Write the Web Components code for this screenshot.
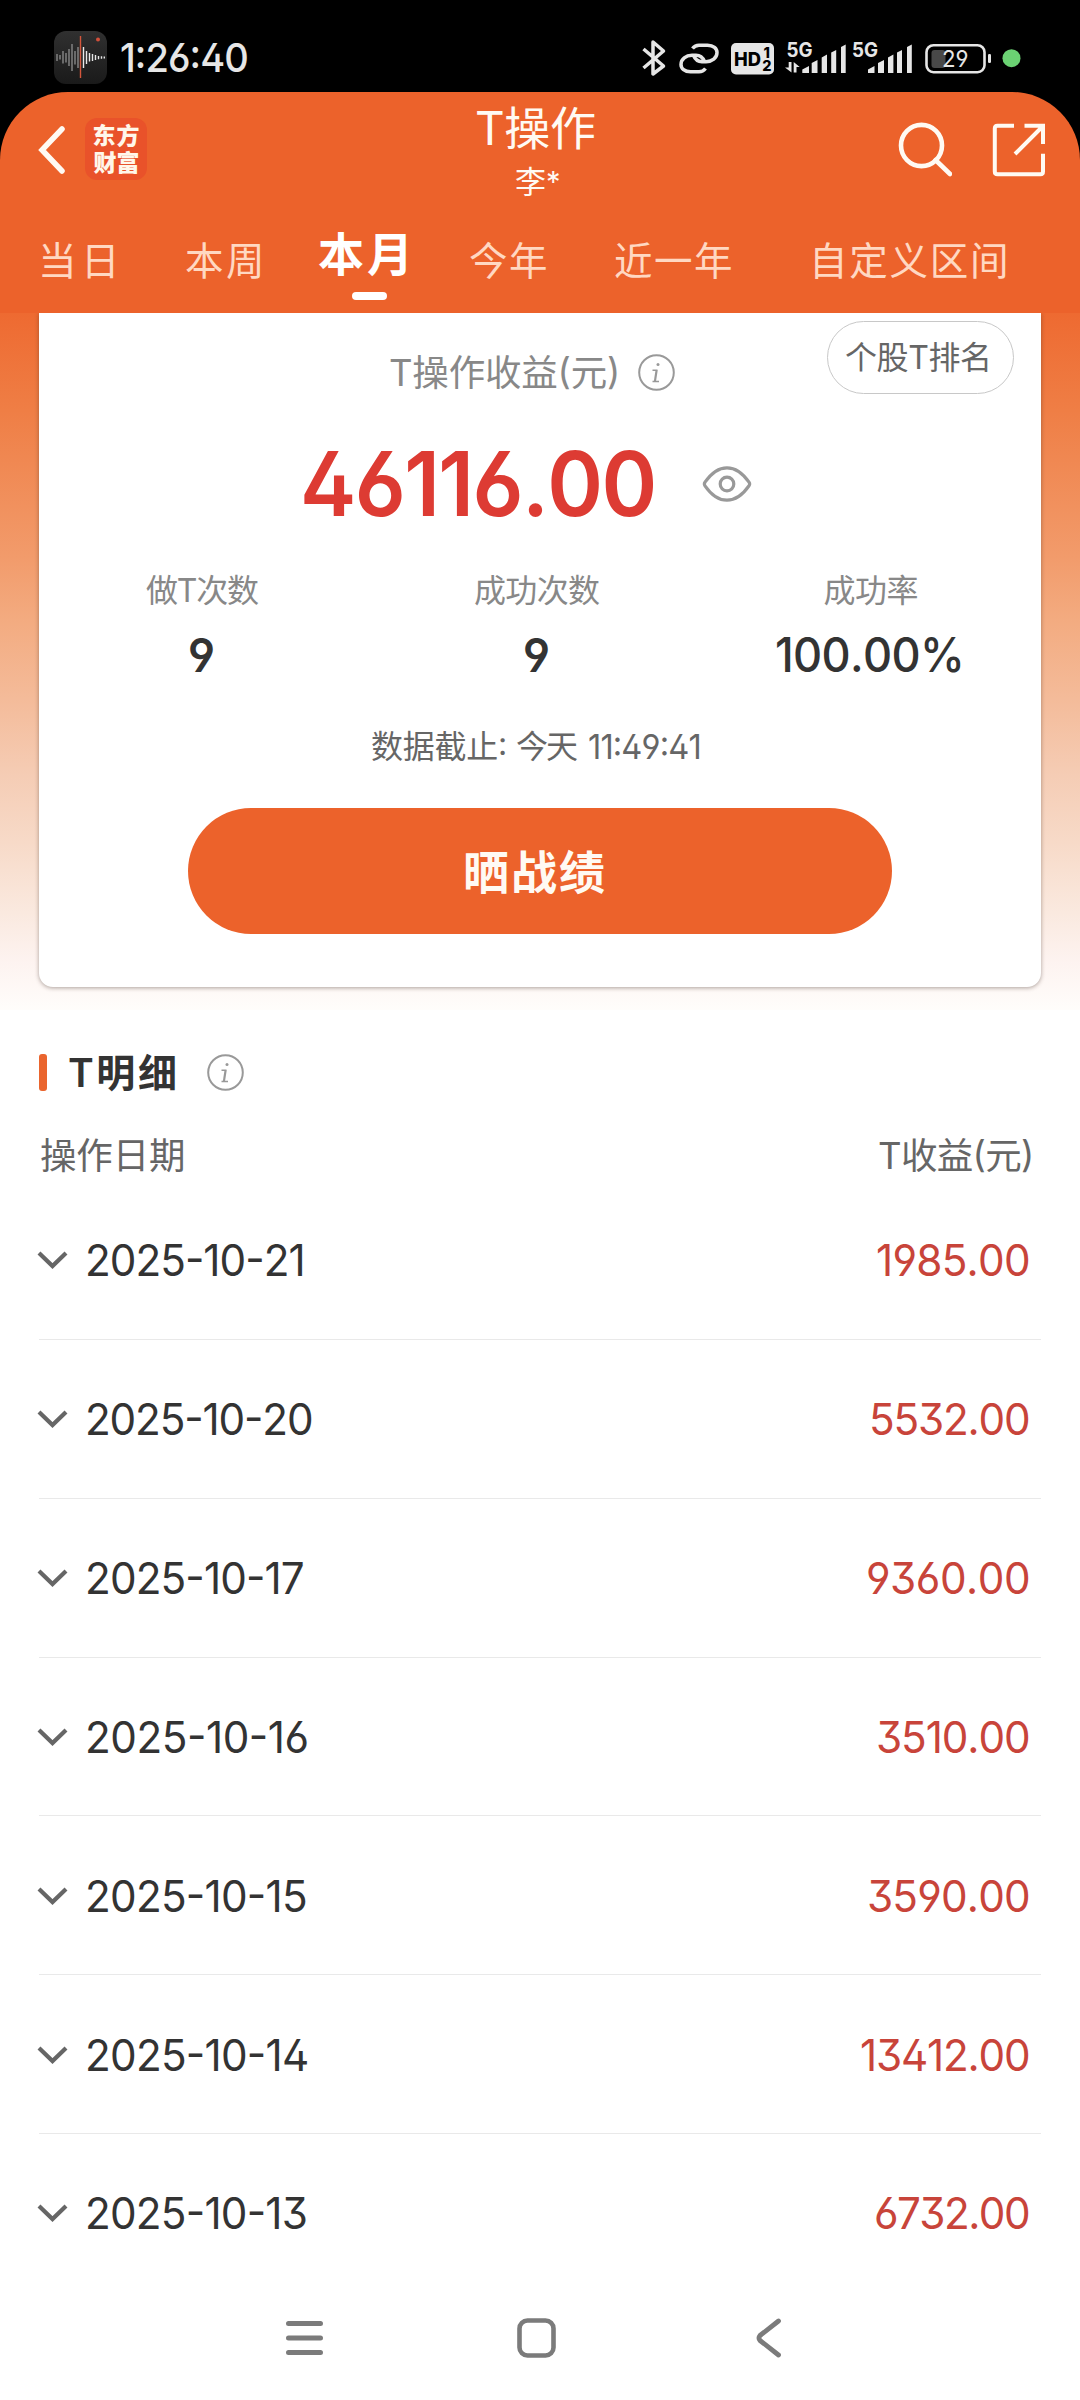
<!DOCTYPE html>
<html lang="zh-CN">
<head>
<meta charset="utf-8">
<title>T操作</title>
<style>
html,body{margin:0;padding:0;background:#fff}
body{width:1080px;height:2400px;overflow:hidden;font-family:Inter,"Noto Sans CJK SC",sans-serif}
</style>
</head>
<body>
<t-app></t-app>
<script>
const define=(name,html,init)=>{
  const tpl=document.createElement('template');
  tpl.innerHTML=html;
  customElements.define(name,class extends HTMLElement{
    connectedCallback(){
      if(this.shadowRoot)return;
      this.attachShadow({mode:'open'}).appendChild(tpl.content.cloneNode(true));
      if(init)init.call(this,this.shadowRoot);
    }
  });
};
const ctx=document.createElement('canvas').getContext('2d');

/* One line of text, tracked so that its ink spans exactly `w` pixels; `x` condenses the glyphs. */
define('fit-text',`<style>
:host{display:block;flex:none;white-space:pre;font-feature-settings:"cv02","cv03","cv04","cv09","case";font-kerning:none}
:host([plain]){font-feature-settings:normal}
span{display:inline-block;transform-origin:0 50%}
</style><span></span>`,function(r){
  const s=r.querySelector('span'),t=this.getAttribute('t'),w=+this.getAttribute('w'),x=+(this.getAttribute('x')||1);
  const size=+this.getAttribute('s'),wt=this.getAttribute('b')||400,h=this.getAttribute('h')||Math.round(size*1.2);
  const fam='Inter,"Noto Sans CJK SC",sans-serif';
  this.style.cssText+=`;width:${w}px;height:${h}px;line-height:${h}px;font-family:${fam};font-size:${size}px;font-weight:${wt}`;
  s.textContent=t;
  ctx.font=`${wt} ${size}px ${fam}`;
  const m=ctx.measureText(t),lsb=-m.actualBoundingBoxLeft,rsb=m.width-m.actualBoundingBoxRight;
  const ink=s.getBoundingClientRect().width-lsb-rsb,n=[...t].length,goal=w/x;
  if(n>1)s.style.letterSpacing=((goal-ink)/(n-1))+'px';
  s.style.marginLeft=(n>1?-lsb:(goal-ink)/2-lsb)*x+'px';
  if(x!==1)s.style.transform=`scaleX(${x})`;
});

define('status-bar',`<style>
:host{display:flex;align-items:center;height:92px;background:#000;color:#e6e6e6;padding:0 59px 0 54px;box-sizing:border-box}
svg{display:block;flex:none;overflow:visible}
.app{margin-top:23px}.clock{margin:24px 395px 0 14px}
.r{margin-top:23px}
text{font-family:Inter,sans-serif}
</style>
<svg class="app" width="53" height="53" viewBox="0 0 53 53"><defs><linearGradient id="g" x1="0" y1="0" x2="0" y2="1"><stop offset="0" stop-color="#303030"/><stop offset="1" stop-color="#1a1a1a"/></linearGradient></defs>
<rect width="53" height="53" rx="12" fill="url(#g)"/>
<path d="M3 23v7M6 24v4.500M9 20v12.500M12 22v9.500M15 18v17M18 13v27M21 20v13.500M24 16v21" stroke="#777" stroke-width="1.700"/>
<path d="M29.500 16v21M32.500 20v13M35.500 22v8.500M38.500 23v7M41.500 24v5M44.500 25v3.200M47.500 25.200v2.500M50.300 25.500v2" stroke="#e8e8e8" stroke-width="1.400"/>
<path d="M26.500 5v42" stroke="#d4563c" stroke-width="1.400"/><circle cx="44" cy="8.500" r="2" fill="#d24f3a"/></svg>
<fit-text class="clock" t="1:26:40" w="126" s="40" h="50" b="450" x=".95"></fit-text>
<svg class="r" width="378" height="36" viewBox="642 39 378 36" fill="none" stroke="#e6e6e6">
<path d="M643.500 48 663.500 65 653 73V41L663.500 50 643.500 67" stroke-width="3.500" stroke-linejoin="round"/>
<path d="M692.500 47.500Q695 44.200 699 44.200H707.500C713.500 44.200 717 47.500 717 51.500C717 57 712 60.700 706 60.700H702C698 60.700 695 58 693.500 54.500" stroke-width="3.500"/>
<path d="M705.500 67.500Q703 70.800 699 70.800H690.500C684.500 70.800 681 67.500 681 63.500C681 58 686 54.300 692 54.300H696C700 54.300 703 57 704.500 60.500" stroke-width="3.500"/>
<g stroke="none" fill="#e6e6e6">
<rect x="731" y="42" width="43" height="31.500" rx="5"/>
<g fill="#000" font-weight="800"><text x="734" y="65" font-size="19" textLength="27" lengthAdjust="spacingAndGlyphs">HD</text><text x="763.500" y="56.500" font-size="14.500">1</text><text x="762.300" y="70" font-size="14.500">2</text></g>
<text x="786.500" y="55.800" font-size="20" font-weight="700" textLength="26" lengthAdjust="spacingAndGlyphs">5G</text>
<text x="852" y="55.800" font-size="20" font-weight="700" textLength="26" lengthAdjust="spacingAndGlyphs">5G</text>
<path d="M802.300 72V68.500L809 65V72zM811.700 72V62L817.500 59V72zM821.700 72V56.500L827 53.500V72zM831.200 72V51.500L836.200 49V72zM841 72V46L845.700 43.500V72z"/>
<path d="M868 72V68.500L874.500 65V72zM878 72V62L884 59V72zM888 72V56.500L893.400 53.500V72zM897 72V51.500L902 49V72zM907 72V46L911.800 43.500V72z"/>
<path d="M788.700 61h2.800v10.500L785 66.500h3.700zM793.700 71.500V61l6 5H796.500v5.500z"/>
<rect x="931.500" y="49" width="14" height="18" rx="3" fill="#484848"/>
<rect x="988" y="53" width="3" height="9" rx="1.200"/>
<text x="942" y="66" font-size="23.500" textLength="26.500" lengthAdjust="spacingAndGlyphs" style="font-feature-settings:'cv04'">29</text>
<circle cx="1011.500" cy="57.200" r="9" fill="#6bd273"/></g>
<rect x="926.500" y="44.200" width="58" height="27" rx="7" stroke-width="2.600"/>
</svg>`);

define('info-icon',`<style>:host{display:block;flex:none}svg{display:block}</style>
<svg width="37" height="37" viewBox="0 0 37 37" fill="none" stroke="#999" stroke-width="2"><circle cx="18.500" cy="18.500" r="17.300"/><path d="M14.500 16.200H19.500M14.500 27.500H21" stroke-width="1.500"/><path d="M18.600 16.300L16.900 27.300" stroke-width="2.200"/><circle cx="20" cy="10.500" r="1.500" fill="#999" stroke="none"/></svg>`);

define('top-header',`<style>
:host{display:block;background:#000}
.box{height:221px;background:#ec622b;border-radius:68px 68px 0 0;color:#fffaf3;display:flex;flex-direction:column}
.bar{height:116px;display:flex;align-items:flex-start}
svg{display:block;flex:none}
.back{margin:33px 0 0 37px}
.logo{margin:26px 0 0 19px;width:62px;height:62px;border-radius:12px;background:#e9522a;display:flex;flex-direction:column;align-items:center;justify-content:center;color:#fff7ea}
.mid{margin:10px 0 0 330px;width:118px;display:flex;flex-direction:column;align-items:center}
.name{display:flex;gap:3px;margin-left:2px}
.find{margin:29px 0 0 303px}.share{margin:30px 0 0 39px}
.tabs{height:105px;display:flex;align-items:flex-start;padding-left:42px;color:#ffd8c2}
.on{display:flex;flex-direction:column;align-items:center;color:#fff;margin:18px 0 0 59px}
.on i{width:35px;height:8px;border-radius:4px;background:#fff;margin:9px 0 0 14px;align-self:center}
</style>
<div class="box"><div class="bar">
<svg class="back" width="29" height="50" viewBox="38 125 29 50" fill="none" stroke="#fffaf3" stroke-width="5.500"><path d="M63 129 43 150 63 171" stroke-linecap="round"/></svg>
<div class="logo"><fit-text t="东方" w="45" s="23" h="27" b="900"></fit-text><fit-text t="财富" w="45" s="23" h="26" b="900"></fit-text></div>
<div class="mid"><fit-text t="T操作" w="118" s="46" h="52" b="400"></fit-text><div class="name"><fit-text t="李" w="29" s="31" h="55"></fit-text><fit-text plain t="*" w="10" s="29" h="55"></fit-text></div></div>
<svg class="find" width="54" height="56" viewBox="898 121 54 56" fill="none" stroke="#fffaf3" stroke-width="4.600"><ellipse cx="921.500" cy="145.500" rx="20.500" ry="20.600"/><path d="M935.500 160 950 174" stroke-linecap="round"/></svg>
<svg class="share" width="54" height="56" viewBox="991 122 54 56" fill="none" stroke="#fffaf3" stroke-width="4"><path d="M1014 125.700H997.500Q994.800 125.700 994.800 128.400V171.500Q994.800 174.200 997.500 174.200H1040.500Q1043 174.200 1043 171.500V153.700M1024.500 125.700H1043V144M1043 126 1015 154"/></svg>
</div>
<div class="tabs">
<fit-text t="当日" w="72" s="38.500" h="106"></fit-text>
<fit-text t="本周" w="74" s="38.500" h="106" style="margin-left:72px"></fit-text>
<div class="on"><fit-text t="本月" w="87" s="46" h="57" b="600"></fit-text><i></i></div>
<fit-text t="今年" w="76" s="38.500" h="106" style="margin-left:64px"></fit-text>
<fit-text t="近一年" w="116" s="38.500" h="106" style="margin-left:69px"></fit-text>
<fit-text t="自定义区间" w="191" s="38.500" h="106" style="margin-left:84px"></fit-text>
</div></div>`);

define('stat-cell',`<style>:host{display:flex;flex-direction:column;align-items:center;flex:none}
::slotted([slot=label]){color:#888}::slotted([slot=value]){color:#333;margin-top:18px}</style>
<slot name="label"></slot><slot name="value"></slot>`);

define('profit-card',`<style>
:host{display:block;height:697px;padding:0 39px;background:linear-gradient(#ee6a31 0,#ef7e45 14%,#f29b6b 35%,#f3ab80 44%,#f4bc9b 56%,#f5ccb4 66%,#f7dac8 76%,#fae9df 86%,#fdf3f0 93%,#fffdfb 100%)}
.card{height:674px;background:#fff;border-radius:0 0 14px 14px;box-shadow:0 1px 4px rgba(60,40,30,.42);clip-path:inset(0 -10px -10px);display:flex;flex-direction:column}
.head{height:82px;display:flex;align-items:flex-start;padding-left:351px;color:#888}
.pill{margin:8px 0 0 152px;width:187px;height:73px;box-sizing:border-box;border:1.500px solid #c8c8c8;border-radius:37px;color:#666;display:flex;align-items:center;padding-left:18px}
.total{height:178px;display:flex;align-items:center;padding-left:265px;color:#dd3b33}
.eye{display:block;margin-left:48px}
.stats{display:flex;height:120px;margin-top:-3px}
.time{display:flex;align-items:center;height:40px;margin:37px 0 0 333px;color:#666}
button{all:unset;box-sizing:border-box;width:704px;height:126px;margin:41px 0 0 149px;border-radius:63px;background:#ec622b;color:#fffaf3;display:flex;align-items:center;padding:1px 0 0 278px}
</style>
<div class="card">
<div class="head"><fit-text t="T操作收益(元)" w="227" s="36.500" h="121"></fit-text><info-icon style="margin:41px 0 0 21px"></info-icon>
<div class="pill"><fit-text t="个股T排名" w="142" s="32" h="44"></fit-text></div></div>
<div class="total"><fit-text t="46116.00" w="350" s="89" h="100" b="620" x=".95"></fit-text>
<svg class="eye" width="50" height="38" viewBox="0 0 50 38" fill="none" stroke="#999" stroke-width="3.200"><path d="M3 17.200C9 8.500 17 2.800 25 2.800S41 8.500 47 17.200Q48.300 19 47 20.800C41 29.500 33 35.200 25 35.200S9 29.500 3 20.800Q1.700 19 3 17.200Z"/><circle cx="25" cy="19" r="6.800"/></svg></div>
<div class="stats">
<stat-cell style="margin-left:107px"><fit-text slot="label" t="做T次数" w="113" s="32" h="42"></fit-text><fit-text slot="value" t="9" w="24" s="47" h="50" b="580" x=".95" style="margin-right:3px"></fit-text></stat-cell>
<stat-cell style="margin-left:216px"><fit-text slot="label" t="成功次数" w="125" s="32" h="42"></fit-text><fit-text slot="value" t="9" w="24" s="47" h="50" b="580" x=".95" style="margin-right:3px"></fit-text></stat-cell>
<stat-cell style="margin-left:177px"><fit-text slot="label" t="成功率" w="93" s="32" h="42" style="margin-left:4px"></fit-text><fit-text slot="value" t="100.00%" w="184" s="47.500" h="50" b="550" x=".95"></fit-text></stat-cell>
</div>
<div class="time"><fit-text t="数据截止:" w="133" s="32" h="40"></fit-text><fit-text t="今天" w="60" s="32" h="40" style="margin-left:12px"></fit-text><fit-text t="11:49:41" w="110" s="34" h="40" x=".96" style="margin-left:12px"></fit-text></div>
<button><fit-text t="晒战绩" w="139" s="46" h="60" b="600"></fit-text></button>
</div>`);

define('detail-head',`<style>
:host{display:block;padding:0 49px 0 39px;height:171px;box-sizing:border-box}
.t{display:flex;align-items:center;height:125px;color:#333}
.t i{width:8px;height:37px;border-radius:3px;background:#ea652e;margin-right:22px}
.c{display:flex;justify-content:space-between;color:#666;padding-left:2px;height:42px}
</style>
<div class="t"><i></i><fit-text t="T明细" w="106" s="39" h="50" b="600"></fit-text><info-icon style="margin-left:32px"></info-icon></div>
<div class="c"><fit-text t="操作日期" w="142" s="36.500" h="43"></fit-text><fit-text t="T收益(元)" w="152" s="36.500" h="43"></fit-text></div>`);

define('detail-row',`<style>
:host{display:flex;align-items:center;height:158.850px;box-sizing:border-box;margin:0 39px;padding:1px 12px 0 0;border-bottom:1.500px solid #e9e9e9;color:#333}
:host(:last-of-type){border-color:transparent}
svg{display:block;margin-left:-2px}
.d{margin-left:20px}.a{margin-left:auto;color:#c8443a}
</style><svg width="31" height="20" viewBox="0 0 31 20" fill="none" stroke="#666" stroke-width="4.200"><path d="M2 3 15.500 16 29 3"/></svg>`,function(r){
  const add=(c,t,w,b)=>{const e=document.createElement('fit-text');e.className=c;e.setAttribute('t',t);e.setAttribute('w',w);e.setAttribute('s',44);e.setAttribute('h',52);e.setAttribute('b',b);e.setAttribute('x',.96);r.appendChild(e)};
  add('d',this.getAttribute('date'),this.getAttribute('dw'),400);
  add('a',this.getAttribute('amount'),this.getAttribute('aw'),430);
});

define('nav-bar',`<style>:host{display:flex;align-items:center;height:124px;padding-left:286px}svg{display:block;flex:none}</style>
<svg width="38" height="40" viewBox="0 0 38 40" stroke="#7b7b7b" stroke-width="5" stroke-linecap="round"><path d="M2.500 5.500H34.500M2.500 20H34.500M2.500 34.500H34.500"/></svg>
<svg style="margin-left:193px" width="39" height="40" viewBox="0 0 39 40" fill="none" stroke="#7b7b7b" stroke-width="4.600"><rect x="2.500" y="2.500" width="34" height="35" rx="8"/></svg>
<svg style="margin-left:199px" width="28" height="42" viewBox="0 0 28 42" fill="none" stroke="#7b7b7b" stroke-width="4.800" stroke-linecap="round" stroke-linejoin="round"><path d="M23.500 4 5 18.500Q3 21 5 23.500L23.500 38"/></svg>`);

define('t-app',`<style>:host{display:flex;flex-direction:column;width:1080px;height:2400px;background:#fff}
.list{height:1095px;flex:none;overflow:hidden}status-bar,top-header,profit-card,detail-head,nav-bar{flex:none}</style>
<status-bar></status-bar><top-header></top-header><profit-card></profit-card><detail-head></detail-head>
<div class="list">
<detail-row date="2025-10-21" dw="215" amount="1985.00" aw="151"></detail-row>
<detail-row date="2025-10-20" dw="224" amount="5532.00" aw="157"></detail-row>
<detail-row date="2025-10-17" dw="215" amount="9360.00" aw="161"></detail-row>
<detail-row date="2025-10-16" dw="219" amount="3510.00" aw="151"></detail-row>
<detail-row date="2025-10-15" dw="218" amount="3590.00" aw="160"></detail-row>
<detail-row date="2025-10-14" dw="219" amount="13412.00" aw="167"></detail-row>
<detail-row date="2025-10-13" dw="218" amount="6732.00" aw="153"></detail-row>
</div><nav-bar></nav-bar>`);
</script>
</body>
</html>
